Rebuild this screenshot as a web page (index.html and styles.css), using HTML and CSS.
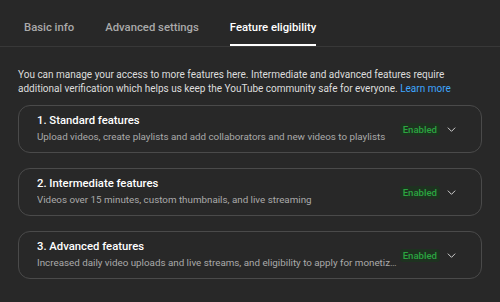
FILE: index.html
```html
<!DOCTYPE html>
<html>
<head>
    <meta charset="UTF-8">
    <title>Feature eligibility</title>
    <link rel="stylesheet" href="styles.css">
</head>
<body>
    <div class="tabs">
        <span class="tab">Basic info</span>
        <span class="tab">Advanced settings</span>
        <span class="tab active">Feature eligibility</span>
    </div>

    <div class="content">
        <p class="intro">You can manage your access to more features here. Intermediate and advanced features require additional verification which helps us keep the YouTube community safe for everyone. <a href="#" class="link">Learn more</a></p>

        <div class="card">
            <div class="card-text">
                <div class="card-title">1. Standard features</div>
                <div class="card-desc">Upload videos, create playlists and add collaborators and new videos to playlists</div>
            </div>
            <span class="badge">Enabled</span>
            <svg class="chevron" viewBox="0 0 24 24"><path d="M4 8l8 8 8-8" fill="none" stroke="#ddd" stroke-width="2"/></svg>
        </div>

        <div class="card">
            <div class="card-text">
                <div class="card-title">2. Intermediate features</div>
                <div class="card-desc">Videos over 15 minutes, custom thumbnails, and live streaming</div>
            </div>
            <span class="badge">Enabled</span>
            <svg class="chevron" viewBox="0 0 24 24"><path d="M4 8l8 8 8-8" fill="none" stroke="#ddd" stroke-width="2"/></svg>
        </div>

        <div class="card">
            <div class="card-text">
                <div class="card-title">3. Advanced features</div>
                <div class="card-desc">Increased daily video uploads and live streams, and eligibility to apply for monetization</div>
            </div>
            <span class="badge">Enabled</span>
            <svg class="chevron" viewBox="0 0 24 24"><path d="M4 8l8 8 8-8" fill="none" stroke="#ddd" stroke-width="2"/></svg>
        </div>
    </div>
</body>
</html>
```

FILE: styles.css
```css
body {
    font-family: Roboto, Arial, sans-serif;
    margin: 0;
    background: #282828;
    color: #fff;
}

.tabs {
    display: flex;
    gap: 31px;
    padding: 0 24px;
    height: 46px;
    border-bottom: 1px solid #383838;
}

.tab {
    display: flex;
    align-items: center;
    padding-top: 10px;
    font-size: 11.3px;
    font-weight: 500;
    color: #aaa;
    border-bottom: 2px solid transparent;
}

.tab.active {
    color: #fff;
    border-bottom-color: #fff;
}

.content {
    padding: 21px 18px 0 18px;
}

.intro {
    margin: 0 0 9px 0;
    font-size: 10px;
    line-height: 14px;
    color: #ddd;
}

.link {
    color: #3ea6ff;
    text-decoration: none;
}

.card {
    display: flex;
    align-items: center;
    height: 46px;
    padding: 0 24px 0 18px;
    margin-bottom: 15px;
    border: 1px solid #4a4a4a;
    border-radius: 12px;
}

.card-text {
    flex: 1;
    min-width: 0;
}

.card-title {
    font-size: 11.3px;
    font-weight: 500;
    line-height: 16px;
    color: #fff;
}

.card-desc {
    font-size: 9.8px;
    line-height: 16px;
    color: #aaa;
    white-space: nowrap;
    overflow: hidden;
    text-overflow: ellipsis;
}

.badge {
    margin-left: 2px;
    padding: 0 3px;
    font-size: 9.6px;
    font-weight: 500;
    line-height: 13px;
    color: #2ba640;
    background: #1e3220;
    border-radius: 3px;
}

.chevron {
    width: 11px;
    height: 11px;
    margin-left: 6px;
}
```
